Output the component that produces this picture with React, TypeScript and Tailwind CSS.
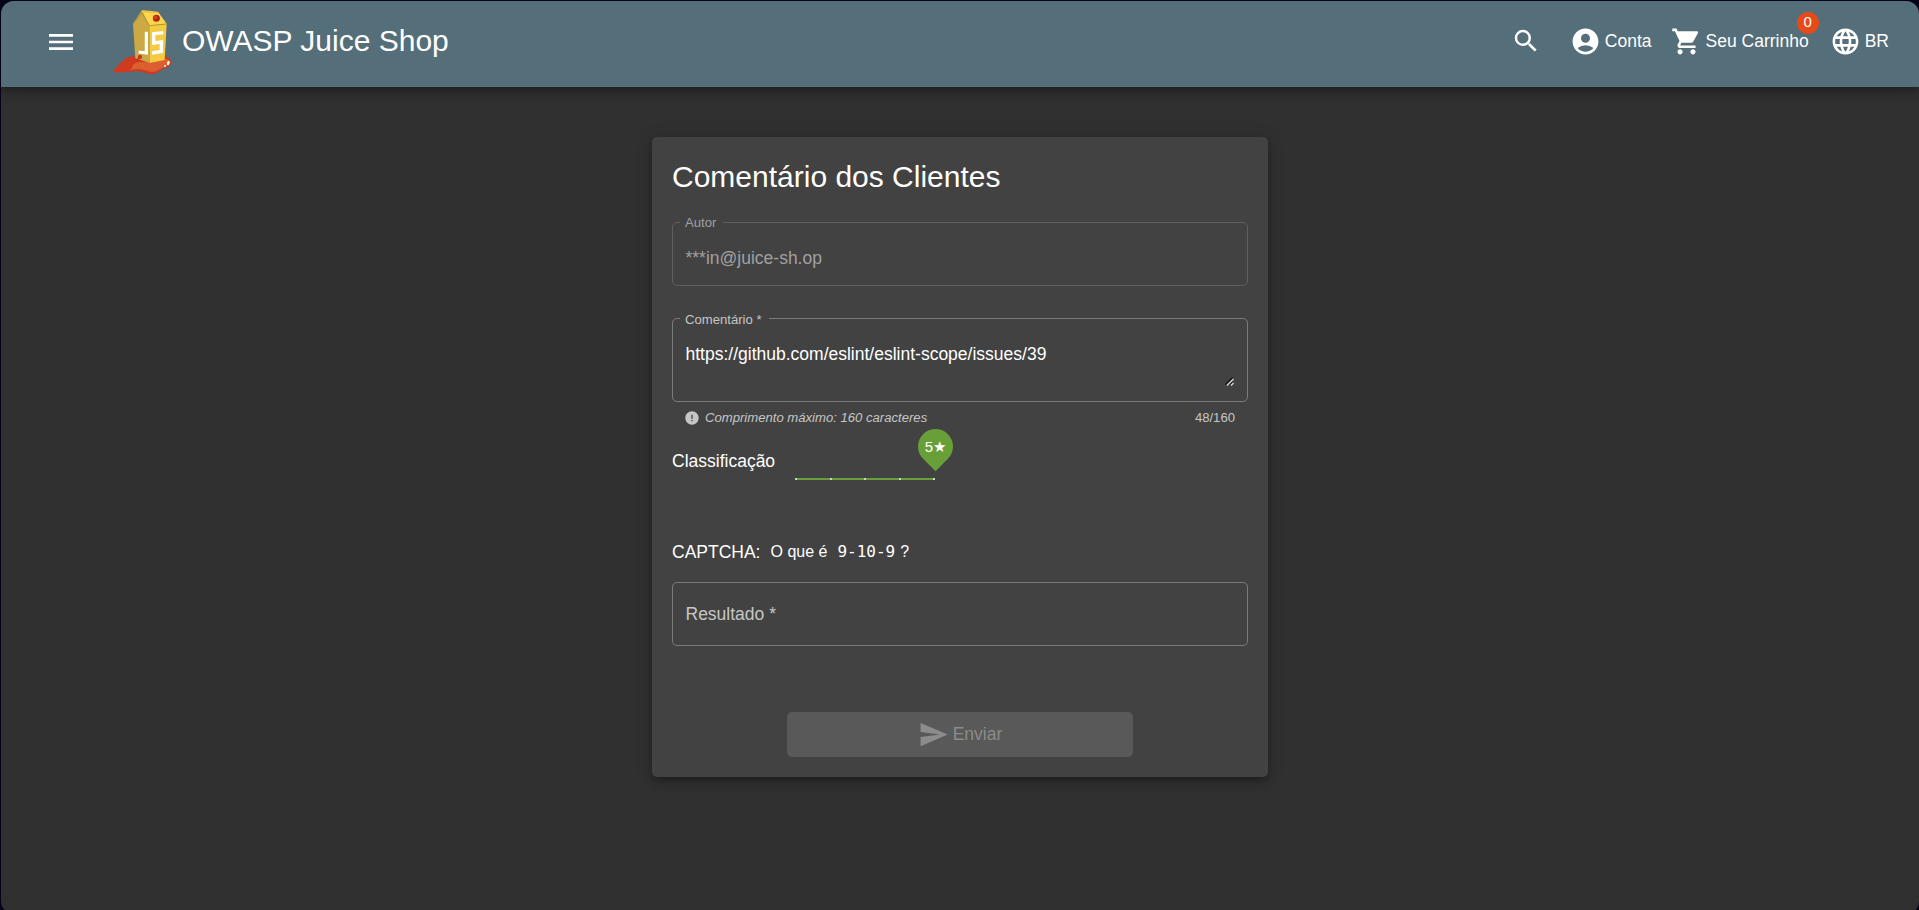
import type { ReactNode } from "react";
import { MdAccountCircle, MdError, MdLanguage, MdMenu, MdSearch, MdSend, MdShoppingCart } from "react-icons/md";

function JuiceLogo() {
  return (
    <svg viewBox="330 15 195 210" className="h-[70px] w-[65px] shrink-0" aria-hidden="true">
      <path
        d="M340 209 C352 197 364 181 378 172 C391 164 410 166 422 166 L494 166 C505 167 514 175 513 186 C512 197 497 202 485 205 C479 212 466 221 453 220 C438 218 428 211 412 211 C390 211 354 218 342 213 Z"
        fill="#cf3a20"
      />
      <path
        d="M385 209 C402 204 392 194 405 187 C420 179 440 187 462 184 L500 174 C511 180 510 190 498 196 C485 201 479 207 464 212 C449 215 436 205 416 204 C403 204 396 207 385 209 Z"
        fill="#dc602f"
      />
      <polygon points="426,27 399,68 406,172 450,186 448,73" fill="#cba944" />
      <polygon points="448,73 500,68 494,177 450,186" fill="#f5cb43" />
      <polygon points="426,29 475,34 500,68 448,74" fill="#ffd54c" />
      <path d="M426 27 L475 32 L475 37 L426 33 Z" fill="#eabf43" />
      <path d="M399 68 L426 36 L448 74 L500 69" fill="none" stroke="#ab8831" strokeWidth="2.5" />
      <circle cx="469" cy="52" r="10.5" fill="#a82814" />
      <circle cx="466" cy="49" r="6" fill="#cf4022" />
      <path d="M439 92 V156 L416 153" fill="none" stroke="#fff" strokeWidth="9.5" />
      <path d="M490 95 L461 98 V126 L484 123 V151 L456 156" fill="none" stroke="#fff" strokeWidth="10" />
      <path d="M413 182 C411 174 416 170 420 169" fill="none" stroke="#b9331c" strokeWidth="4" />
      <circle cx="420" cy="168" r="6.5" fill="#c43a20" />
      <ellipse cx="505" cy="186" rx="4" ry="7" transform="rotate(15 505 186)" fill="#fff" />
      <circle cx="495" cy="195" r="3" fill="#fff" />
    </svg>
  );
}

function Toolbar() {
  return (
    <header className="relative z-10 flex h-[86px] shrink-0 items-center bg-[#546e7a] pb-1.5 pl-11 shadow-[0_3px_5px_-1px_rgba(0,0,0,0.2),0_6px_10px_0_rgba(0,0,0,0.14),0_1px_18px_0_rgba(0,0,0,0.12)]">
      <MdMenu className="mt-0.5 size-8 shrink-0" />
      <div className="ml-[33px] flex items-center">
        <JuiceLogo />
        <h1 className="ml-[7px] text-[30px] leading-9">OWASP Juice Shop</h1>
      </div>
      <nav className="ml-auto flex items-center pr-[30px] text-[17.5px]">
        <MdSearch className="size-[30px]" />
        <div className="ml-[29px] flex items-center gap-1">
          <MdAccountCircle className="size-[31px]" />
          <span>Conta</span>
        </div>
        <div className="relative ml-[19px] flex items-center gap-1">
          <MdShoppingCart className="size-[31px]" />
          <span>Seu Carrinho</span>
          <span className="absolute -top-[14px] -right-[10px] flex size-[22px] items-center justify-center rounded-full bg-[#e64a19] text-[15px]">
            0
          </span>
        </div>
        <div className="ml-[21px] flex items-center gap-1">
          <MdLanguage className="size-[31px]" />
          <span>BR</span>
        </div>
      </nav>
    </header>
  );
}

type FieldProps = { label?: string; className: string; labelClass?: string; children: ReactNode };

function Field({ label, className, labelClass = "", children }: FieldProps) {
  return (
    <div className={`relative rounded-[5px] border pr-3 pl-[12.5px] ${className}`}>
      {label && (
        <span className={`absolute left-[7px] bg-[#424242] pr-[7px] pl-[5px] text-[13.125px] leading-4 ${labelClass}`}>
          {label}
        </span>
      )}
      {children}
    </div>
  );
}

function Rating() {
  return (
    <div className="relative flex h-[2px] w-[140px] justify-between bg-[#689f38]">
      {[1, 2, 3, 4, 5].map((step) => (
        <span key={step} className="size-[2px] bg-[#c8d8bc]" />
      ))}
      <div className="absolute -top-[49px] -right-[18px] size-[35px] rotate-45 rounded-full rounded-br-none bg-[#689f38]">
        <span className="flex size-full -rotate-45 items-center justify-center text-[15px] leading-none">5★</span>
      </div>
    </div>
  );
}

function FeedbackForm() {
  return (
    <main className="mx-auto mt-[50px] flex h-[640px] w-[616px] flex-col rounded-[5px] bg-[#424242] px-5 shadow-[0_3px_5px_-1px_rgba(0,0,0,0.2),0_6px_10px_0_rgba(0,0,0,0.14),0_1px_18px_0_rgba(0,0,0,0.12)]">
      <h2 className="mt-5 text-[30px] leading-10">Comentário dos Clientes</h2>
      <Field label="Autor" labelClass="-top-2 text-[#a0a0a0]" className="mt-[25px] flex h-16 items-center border-[#5f5f5f] pt-2 text-[17.5px] text-[#a0a0a0]">
        ***in@juice-sh.op
      </Field>
      <Field label="Comentário *" labelClass="-top-[7px] text-[#c6c6c6]" className="mt-8 flex h-[84px] flex-col border-[#7b7b7b] pt-[23px] text-[17.5px]">
        <span className="leading-6">https://github.com/eslint/eslint-scope/issues/39</span>
        <svg viewBox="0 0 9 9" className="mt-[11px] mr-px ml-auto size-[9px]" aria-hidden="true">
          <path d="M0.5 7.5 L7.5 0.5 M4.5 7.5 L7.5 4.5" stroke="#151515" strokeWidth="1.2" />
          <path d="M2 8.5 L8.5 2 M6 8.5 L8.5 6" stroke="#d8d8d8" strokeWidth="1.3" />
        </svg>
      </Field>
      <div className="mt-[7px] flex h-[18px] items-center px-[13px] text-[13.125px] text-[#c6c6c6]">
        <MdError className="-ml-[1px] size-[16px]" />
        <em className="ml-[5px]">Comprimento máximo: 160 caracteres</em>
        <span className="ml-auto">48/160</span>
      </div>
      <div className="mt-[20px] flex h-7 items-center text-[17.5px]">
        <span>Classificação</span>
        <div className="mt-9 ml-5">
          <Rating />
        </div>
      </div>
      <div className="mt-[63px] flex h-7 items-center">
        <span className="text-[17.5px]">CAPTCHA:</span>
        <span className="ml-[10px] text-[16px]">O que é</span>
        <code className="ml-[10px] font-['DejaVu_Sans_Mono',monospace] text-[16px]">9-10-9</code>
        <span className="ml-[5px] text-[16px]">?</span>
      </div>
      <Field className="mt-4 flex h-16 items-center border-[#7b7b7b] text-[17.5px] text-[#c6c6c6]">Resultado *</Field>
      <button
        type="button"
        disabled
        className="mt-[66px] flex h-[45px] w-[346px] items-center justify-center gap-1 self-center rounded-[5px] bg-[#595959] text-[17.5px] text-[#8c8c8c]"
      >
        <MdSend className="size-[31px]" />
        <span>Enviar</span>
      </button>
    </main>
  );
}

export default function App() {
  return (
    <div className="h-[910px] w-full overflow-hidden bg-[#03031a] pt-px pl-px font-['Liberation_Sans',Arial,sans-serif] text-white">
      <div className="flex h-[913px] flex-col overflow-hidden rounded-[13px] bg-[#303030]">
        <Toolbar />
        <FeedbackForm />
      </div>
    </div>
  );
}
